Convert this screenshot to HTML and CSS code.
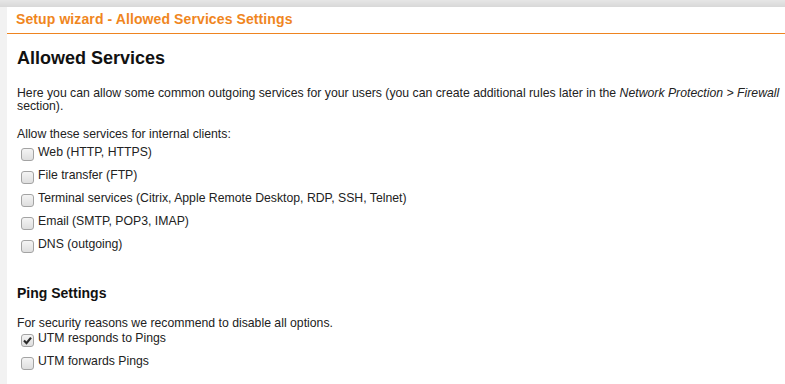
FILE: index.html
```html
<!DOCTYPE html>
<html lang="en">

<head>
    <meta charset="UTF-8">
    <meta name="viewport" content="width=device-width, initial-scale=1.0">
    <title>Setup wizard</title>
    <link rel="stylesheet" href="styles.css">
</head>

<body>
    <div class="top-bar"></div>
    <div class="page">
        <div class="wizard-title">Setup wizard - Allowed Services Settings</div>
        <div class="wizard-content">
            <h1 class="section-title">Allowed Services</h1>
            <p class="intro">Here you can allow some common outgoing services for your users (you can create additional rules later in the <em>Network Protection &gt; Firewall</em> section).</p>

            <p class="hint">Allow these services for internal clients:</p>
            <div class="option-list">
                <label class="option"><span class="check"></span>Web (HTTP, HTTPS)</label>
                <label class="option"><span class="check"></span>File transfer (FTP)</label>
                <label class="option"><span class="check"></span>Terminal services (Citrix, Apple Remote Desktop, RDP, SSH, Telnet)</label>
                <label class="option"><span class="check"></span>Email (SMTP, POP3, IMAP)</label>
                <label class="option"><span class="check"></span>DNS (outgoing)</label>
            </div>

            <h2 class="sub-title">Ping Settings</h2>
            <p class="hint hint-tight">For security reasons we recommend to disable all options.</p>
            <div class="option-list option-list-tight">
                <label class="option">
                    <span class="check checked">
                        <svg width="9" height="9" viewBox="0 0 9 9">
                            <path d="M1 4.6 L3.5 7.2 L8 1.6" fill="none" stroke="#2b2b2b" stroke-width="2.2" />
                        </svg>
                    </span>UTM responds to Pings
                </label>
                <label class="option"><span class="check"></span>UTM forwards Pings</label>
            </div>
        </div>
    </div>
</body>

</html>
```

FILE: styles.css
```css
body {
    margin: 0;
    padding: 0;
    background: #f2f2f2;
    font-family: 'Liberation Sans', Arial, sans-serif;
    color: #222;
    height: 384px;
    overflow: hidden;
}

.top-bar {
    height: 7px;
    background: linear-gradient(#e6e6e6, #d8d8d8);
}

.page {
    margin-left: 7px;
    background: #fff;
    height: 377px;
}

.wizard-title {
    font-size: 14px;
    font-weight: bold;
    line-height: 16px;
    letter-spacing: 0.1px;
    color: #f0861e;
    padding: 4px 9px 6px;
    border-bottom: 1px solid #ee8420;
}

.wizard-content {
    padding: 0 4px 0 10px;
}

.section-title {
    font-size: 18px;
    line-height: 21px;
    font-weight: bold;
    margin: 14px 0 0;
    color: #111;
}

.intro {
    font-size: 12.25px;
    line-height: 13px;
    margin: 18px 0 0;
}

.hint {
    font-size: 12.25px;
    line-height: 14px;
    margin: 14px 0 0;
}

.option-list {
    margin-top: 3px;
}

.option-list-tight {
    margin-top: 0;
}

.option {
    display: flex;
    align-items: flex-start;
    font-size: 12.25px;
    line-height: 17px;
    margin-bottom: 6px;
    color: #222;
}

.check {
    box-sizing: border-box;
    width: 13px;
    height: 13px;
    margin: 4px 4px 0 4px;
    border: 1px solid #a3a3a3;
    border-radius: 3px;
    background: linear-gradient(#f4f4f4, #dedede);
    display: flex;
    align-items: center;
    justify-content: center;
}

.sub-title {
    font-size: 14px;
    line-height: 16px;
    font-weight: bold;
    margin: 32px 0 0;
    color: #111;
}

.hint-tight {
    margin-top: 15px;
}
```
